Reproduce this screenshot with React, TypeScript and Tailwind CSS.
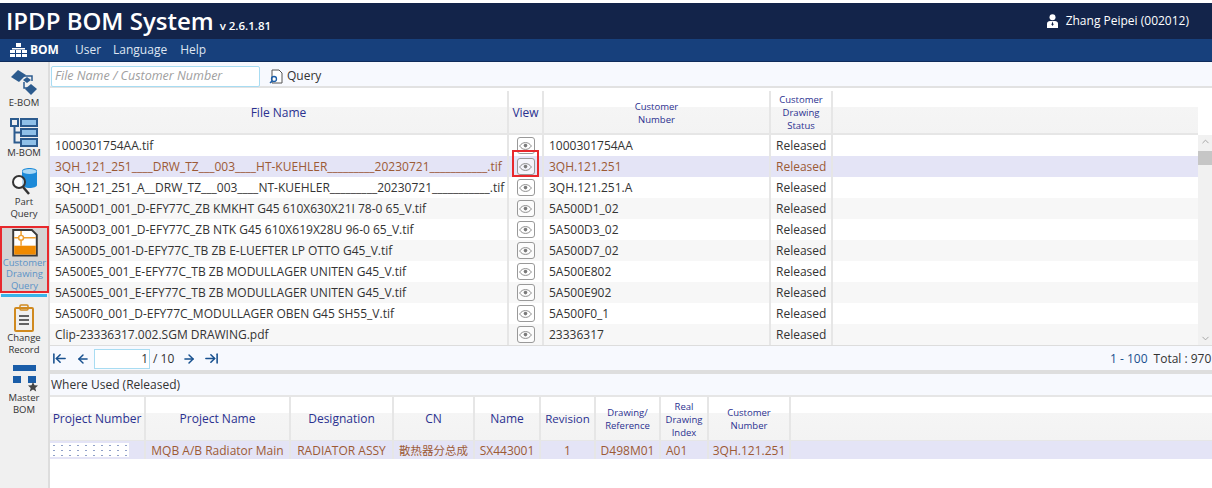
import React from 'react';
import { ChevronUp, ChevronDown, ArrowLeft, ArrowRight, ArrowLeftToLine, ArrowRightToLine } from 'lucide-react';

const rows = [
  ['1000301754AA.tif', '1000301754AA', 'Released'],
  ['3QH_121_251____DRW_TZ___003____HT-KUEHLER_________20230721___________.tif', '3QH.121.251', 'Released'],
  ['3QH_121_251_A__DRW_TZ___003____NT-KUEHLER_________20230721___________.tif', '3QH.121.251.A', 'Released'],
  ['5A500D1_001_D-EFY77C_ZB KMKHT G45 610X630X21I 78-0 65_V.tif', '5A500D1_02', 'Released'],
  ['5A500D3_001_D-EFY77C_ZB NTK G45 610X619X28U 96-0 65_V.tif', '5A500D3_02', 'Released'],
  ['5A500D5_001-D-EFY77C_TB ZB E-LUEFTER LP OTTO G45_V.tif', '5A500D7_02', 'Released'],
  ['5A500E5_001_E-EFY77C_TB ZB MODULLAGER UNITEN G45_V.tif', '5A500E802', 'Released'],
  ['5A500E5_001_E-EFY77C_TB ZB MODULLAGER UNITEN G45_V.tif', '5A500E902', 'Released'],
  ['5A500F0_001_D-EFY77C_MODULLAGER OBEN G45 SH55_V.tif', '5A500F0_1', 'Released'],
  ['Clip-23336317.002.SGM DRAWING.pdf', '23336317', 'Released'],
];

function SideItem({ icon, label, active }: { icon: React.ReactNode; label: string[]; active?: boolean }) {
  return (
    <div className={active ? 'flex flex-col items-center h-[67px] w-[49px] border-2 border-[#e8282c] bg-[#d4d4d4] pt-[1px]' : 'flex flex-col items-center w-[48px]'}>
      {icon}
      <div className={active ? 'text-[9.5px] leading-[11.5px] text-center text-[#5b93c7]' : 'text-[9.5px] leading-[11.5px] text-center text-[#333333]'}>
        {label.map((l) => <div key={l}>{l}</div>)}
      </div>
    </div>
  );
}

function Head({ w, size, children }: { w: string; size?: string; children: React.ReactNode }) {
  return (
    <div className={`${w} shrink-0 flex items-center justify-center text-center border-r-2 border-[#e6e6e6] pt-[1px] text-[#2b3190] ${size ?? 'text-[12px] leading-[13px]'}`}>
      <div>{children}</div>
    </div>
  );
}

function EyeButton() {
  return (
    <div className="w-[18px] h-[17px] bg-white/60 border border-[#999999] rounded-[3px] flex items-center justify-center">
      <svg width="13" height="8" viewBox="0 0 13 8" fill="none">
        <path d="M.6 4C2.300 1.600 4.200.6 6.500.6s4.200 1 5.900 3.400C10.700 6.400 8.800 7.400 6.500 7.400S2.300 6.400.6 4Z" stroke="#808080" strokeWidth="0.900" />
        <circle cx="6.500" cy="3.600" r="1.800" fill="#7a7a7a" />
      </svg>
    </div>
  );
}

export default function App() {
  return (
    <div className="w-[1212px] h-[488px] overflow-hidden bg-white flex flex-col text-[12px] text-[#333333]" style={{ fontFamily: '"Open Sans","Noto Sans CJK SC",sans-serif' }}>
      <div className="h-[3px] bg-white shrink-0" />
      <div className="h-[36px] shrink-0 bg-[#13244a] flex items-center justify-between text-white">
        <div className="flex items-baseline pl-[6px]">
          <span className="text-[24px] font-semibold leading-[36px]">IPDP BOM System</span>
          <span className="text-[11.5px] font-semibold ml-[6px]">v 2.6.1.81</span>
        </div>
        <div className="flex items-center pr-[23px] text-[12px]">
          <svg width="11" height="14" viewBox="0 0 11 14" className="mr-[8px]" fill="white">
            <circle cx="5.500" cy="3.200" r="3" />
            <path d="M0 14V9.500C0 8 1.500 7 3 7h5c1.500 0 3 1 3 2.500V14Z" />
            <path d="M5.500 7.500l1 3-1 1.500-1-1.500Z" fill="#13244a" />
          </svg>
          Zhang Peipei (002012)
        </div>
      </div>
      <div className="h-[23px] shrink-0 bg-[#17407c] border-b border-[#0f2c5c] flex items-center text-white text-[12px]">
        <svg width="17" height="14" viewBox="0 0 17 14" fill="white" className="ml-[10px] mr-[3px]">
          <rect x="6" y="0" width="5" height="4" />
          <rect x="2" y="5" width="13" height="1.500" />
          <rect x="0" y="7" width="5" height="3" />
          <rect x="6" y="7" width="5" height="3" />
          <rect x="12" y="7" width="5" height="3" />
          <rect x="0" y="11" width="5" height="3" />
          <rect x="6" y="11" width="5" height="3" />
          <rect x="12" y="11" width="5" height="3" />
        </svg>
        <span className="font-bold">BOM</span>
        <span className="ml-[16px] text-[#dfe6f2]">User</span>
        <span className="ml-[12px] text-[#dfe6f2]">Language</span>
        <span className="ml-[13px] text-[#dfe6f2]">Help</span>
      </div>
      <div className="flex flex-1 min-h-0">
        <div className="w-[50px] shrink-0 bg-[#f0f0f0] border-r-2 border-[#dddddd] flex flex-col items-start pt-[7px]">
          <SideItem label={['E-BOM']} icon={
            <svg width="28" height="28" viewBox="0 0 28 28" fill="#2c5b8e">
              <path d="M1 8 8 1l8 5-7 7Z" />
              <path d="M13 11l4-3 4 3-4 3Z" />
              <path d="M15 20l6-5 6 5-6 6Z" />
              <path d="M12 7h10v5M14 13v6h4" fill="none" stroke="#2c5b8e" strokeWidth="1.500" />
            </svg>
          } />
          <div className="h-[9px] shrink-0" />
          <SideItem label={['M-BOM']} icon={
            <svg width="28" height="29" viewBox="0 0 28 29" fill="none" stroke="#2c5b8e" strokeWidth="2">
              <rect x="1" y="1" width="7" height="7" />
              <rect x="11" y="1" width="16" height="7" fill="#8fc0e8" />
              <rect x="11" y="11" width="16" height="7" fill="#8fc0e8" />
              <rect x="11" y="21" width="16" height="7" fill="#8fc0e8" />
              <path d="M4.500 8v16.500H11M4.500 14.500H11" />
            </svg>
          } />
          <div className="h-[10px] shrink-0" />
          <SideItem label={['Part', 'Query']} icon={
            <svg width="28" height="28" viewBox="0 0 28 28">
              <path d="M12 3c0-4 15-4 15 0v14c0 4-15 4-15 0Z" fill="#1c8ad8" />
              <ellipse cx="19.500" cy="3.500" rx="7" ry="2.500" fill="#a9d8f5" />
              <circle cx="9" cy="14" r="6" fill="white" fillOpacity="0.7" stroke="#333" strokeWidth="2" />
              <path d="M13 19l6 7" stroke="#333" strokeWidth="2.500" />
            </svg>
          } />
          <div className="h-[7px] shrink-0" />
          <SideItem active label={['Customer', 'Drawing', 'Query']} icon={
            <svg width="26" height="28" viewBox="0 0 26 28">
              <path d="M1 1h19l5 5v21H1Z" fill="white" stroke="#3a3a3a" strokeWidth="2" />
              <rect x="2" y="17" width="22" height="9" fill="#f08a00" />
              <path d="M2 9h22M9 2v15" stroke="#f0a030" strokeWidth="1.500" />
              <circle cx="9" cy="9" r="2.500" fill="white" stroke="#f0a030" strokeWidth="1.500" />
            </svg>
          } />
          <div className="w-[46px] h-[3px] ml-[1px] bg-[#38b4ea] mt-[1px] mb-[7px] shrink-0" />
          <SideItem label={['Change', 'Record']} icon={
            <svg width="24" height="28" viewBox="0 0 24 28" fill="none">
              <rect x="3" y="4" width="18" height="23" rx="1" stroke="#d08a20" strokeWidth="2" />
              <rect x="8" y="1" width="8" height="5" rx="1" stroke="#d08a20" strokeWidth="1.500" />
              <path d="M7 12h10M7 16h10M7 20h10" stroke="#333" strokeWidth="1.500" />
            </svg>
          } />
          <div className="h-[9px] shrink-0" />
          <SideItem label={['Master', 'BOM']} icon={
            <svg width="28" height="28" viewBox="0 0 28 28" fill="#1a5da8">
              <rect x="3" y="1" width="23" height="6" />
              <rect x="3" y="12" width="8" height="7" />
              <rect x="18" y="12" width="8" height="7" />
              <path d="M23 18l1.500 3.300 3.500.3-2.700 2.300.9 3.500-3.200-1.900-3.200 1.900.9-3.500-2.700-2.300 3.500-.3Z" fill="#444" />
            </svg>
          } />
        </div>

        <div className="flex-1 min-w-0 flex flex-col">
          <div className="h-[26px] shrink-0 bg-[#f7f9fe] border-b-2 border-[#e2e2e2] flex items-center pl-[1px] pt-[4px]">
            <div className="w-[209px] h-[21px] bg-white border border-[#a8dcf2] rounded-[2px] flex items-center pl-[3px] text-[12.5px] italic text-[#a0a0a0]">File Name / Customer Number</div>
            <svg width="14" height="15" viewBox="0 0 14 15" fill="none" className="ml-[9px] mr-[4px]">
              <path d="M3 1h7l3 3v10H3Z" fill="white" stroke="#555" />
              <circle cx="5" cy="10" r="2.500" stroke="#1a5da8" strokeWidth="1.300" />
              <path d="M3 12l-2 2" stroke="#1a5da8" strokeWidth="1.500" />
            </svg>
            <span className="text-[12px]">Query</span>
          </div>
          <div className="h-[3px] shrink-0" />
          <div className="h-[44px] shrink-0 flex w-[1148px] bg-[linear-gradient(#ffffff_37%,#f5f5f5_37%,#f3f3f3)] border-b-2 border-[#e6e6e6]">
            <Head w="w-[459px]" size="text-[12px]">File Name</Head>
            <Head w="w-[35px]" size="text-[12px]">View</Head>
            <Head w="w-[227px]" size="text-[9.5px] leading-[13px]">Customer<br />Number</Head>
            <Head w="w-[62px]" size="text-[9.5px] leading-[13px]">Customer<br />Drawing<br />Status</Head>
          </div>
          <div className="h-[210px] shrink-0 flex">
            <div className="w-[1148px] flex flex-col">
              {rows.map((r, i) => {
                const selected = i === 1;
                return (
                  <div key={i} className={`h-[21px] flex items-center ${selected ? 'bg-[#e4e4f6] text-[#9c5a35]' : i % 2 === 0 ? 'bg-white' : 'bg-[#f7f7f7]'}`}>
                    <div className="w-[459px] shrink-0 pl-[5px] whitespace-nowrap overflow-hidden border-r-2 border-[#e6e6e6] h-full flex items-center">
                      {r[0]}
                    </div>
                    <div className="w-[35px] shrink-0 h-full border-r-2 border-[#e6e6e6] flex items-center justify-center relative">
                      <EyeButton />
                      {selected && <div className="absolute left-[3px] top-[-6px] w-[27px] h-[27px] border-2 border-[#e8282c]" />}
                    </div>
                    <div className="w-[227px] shrink-0 pl-[5px] h-full border-r-2 border-[#e6e6e6] flex items-center">{r[1]}</div>
                    <div className="w-[62px] shrink-0 pl-[5px] h-full border-r-2 border-[#e6e6e6] flex items-center">{r[2]}</div>
                  </div>
                );
              })}
            </div>
            <div className="w-[14px] shrink-0 bg-[#f1f1f1] flex flex-col items-center">
              <ChevronUp size={11} className="text-[#a0a0a0] mt-[1px]" />
              <div className="w-full h-[14px] bg-[#c6c6c6] mt-[4px]" />
              <div className="flex-1" />
              <ChevronDown size={11} className="text-[#a0a0a0] mb-[1px]" />
            </div>
          </div>
          <div className="h-[25px] shrink-0 bg-[#f7f9fe] flex items-center justify-between border-t border-[#dddddd] pl-[2px] pt-[1px]">
            <div className="flex items-center text-[#17508f]">
              <ArrowLeftToLine size={15} strokeWidth={2.500} />
              <ArrowLeft size={14} strokeWidth={2.500} className="ml-[9px]" />
              <div className="w-[56px] h-[20px] ml-[4px] bg-white border border-[#a8dcf2] text-right pr-[1px] text-[12px] text-[#333333] leading-[18px]">1</div>
              <span className="ml-[3px] text-[12px] text-[#333333]">/ 10</span>
              <ArrowRight size={14} strokeWidth={2.500} className="ml-[8px]" />
              <ArrowRightToLine size={15} strokeWidth={2.500} className="ml-[8px]" />
            </div>
            <div className="text-[12px] whitespace-nowrap w-[102px] overflow-hidden"><span className="text-[#17508f]">1 - 100</span><span className="ml-[6px]">Total : 970</span></div>
          </div>
          <div className="h-[4px] shrink-0 bg-[#dedede]" />
          <div className="h-[21px] shrink-0 bg-[#f7f9fe] flex items-center pl-[1px] text-[12px]">Where Used (Released)</div>
          <div className="h-[2px] shrink-0 bg-[#e6e6e6]" />
          <div className="h-[44px] shrink-0 flex bg-[linear-gradient(#ffffff_37%,#f5f5f5_37%,#f3f3f3)] border-b border-[#e6e6e6]">
            <Head w="w-[96px]" size="text-[12px]">Project Number</Head>
            <Head w="w-[145px]" size="text-[12px]">Project Name</Head>
            <Head w="w-[103px]" size="text-[12px]">Designation</Head>
            <Head w="w-[81px]" size="text-[12px]">CN</Head>
            <Head w="w-[66px]" size="text-[12px]">Name</Head>
            <Head w="w-[55px]" size="text-[11.5px]">Revision</Head>
            <Head w="w-[65px]" size="text-[9.5px] leading-[13px]">Drawing/<br />Reference</Head>
            <Head w="w-[48px]" size="text-[9.5px] leading-[13px]">Real<br />Drawing<br />Index</Head>
            <Head w="w-[82px]" size="text-[9.5px] leading-[13px]">Customer<br />Number</Head>
          </div>
          <div className="h-[18px] shrink-0 flex items-center bg-[#e4e4f6] text-[#9c5a35] whitespace-nowrap">
            <div className="w-[96px] shrink-0 h-full border-r-2 border-[#e6e6e6] flex items-center">
              <div className="w-[79px] h-[14px] bg-white bg-[radial-gradient(#8fa0c8_0.6px,transparent_1px)] bg-[length:8px_5px]" />
            </div>
            <div className="w-[145px] shrink-0 pt-[2px] border-r-2 border-[#e6e6e6] h-full flex items-center justify-center">MQB A/B Radiator Main</div>
            <div className="w-[103px] shrink-0 pt-[2px] border-r-2 border-[#e6e6e6] h-full flex items-center justify-center overflow-hidden">RADIATOR ASSY</div>
            <div className="w-[81px] shrink-0 pt-[2px] border-r-2 border-[#e6e6e6] h-full flex items-center justify-center text-[11.5px]">散热器分总成</div>
            <div className="w-[66px] shrink-0 pt-[2px] border-r-2 border-[#e6e6e6] h-full flex items-center justify-center">SX443001</div>
            <div className="w-[55px] shrink-0 pt-[2px] border-r-2 border-[#e6e6e6] h-full flex items-center justify-center">1</div>
            <div className="w-[65px] shrink-0 pt-[2px] border-r-2 border-[#e6e6e6] h-full flex items-center justify-center">D498M01</div>
            <div className="w-[48px] shrink-0 pt-[2px] pl-[5px] border-r-2 border-[#e6e6e6] h-full flex items-center">A01</div>
            <div className="w-[82px] shrink-0 pt-[2px] border-r-2 border-[#e6e6e6] h-full flex items-center justify-center">3QH.121.251</div>
          </div>
        </div>
      </div>
    </div>
  );
}
